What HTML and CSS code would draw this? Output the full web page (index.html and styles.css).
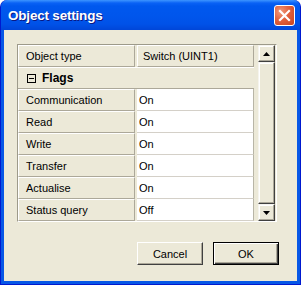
FILE: index.html
```html
<!DOCTYPE html>
<html>
<head>
<meta charset="utf-8">
<link rel="stylesheet" href="styles.css">
</head>
<body>
<div class="window">
  <div class="titlebar">
    <span class="title">Object settings</span>
    <div class="close">
      <svg width="13" height="13" viewBox="0 0 13 13"><path d="M2 2 L11 11 M11 2 L2 11" stroke="#fff" stroke-width="2.2" stroke-linecap="square"/></svg>
    </div>
  </div>
  <div class="client">
    <div class="grid">
      <div class="rows">
        <div class="row"><div class="name">Object type</div><div class="value ro">Switch (UINT1)</div></div>
        <div class="row cat"><span class="toggle"></span><span class="cat-label">Flags</span></div>
        <div class="row"><div class="name">Communication</div><div class="value">On</div></div>
        <div class="row"><div class="name">Read</div><div class="value">On</div></div>
        <div class="row"><div class="name">Write</div><div class="value">On</div></div>
        <div class="row"><div class="name">Transfer</div><div class="value">On</div></div>
        <div class="row"><div class="name">Actualise</div><div class="value">On</div></div>
        <div class="row"><div class="name">Status query</div><div class="value">Off</div></div>
      </div>
      <div class="scrollbar">
        <div class="sb-btn"><svg width="7" height="4" viewBox="0 0 7 4"><path d="M3.5 0 L7 4 L0 4 Z" fill="#000"/></svg></div>
        <div class="thumb"></div>
        <div class="sb-btn"><svg width="7" height="4" viewBox="0 0 7 4"><path d="M0 0 L7 0 L3.5 4 Z" fill="#000"/></svg></div>
      </div>
    </div>
    <div class="buttons">
      <div class="btn">Cancel</div>
      <div class="btn default">OK</div>
    </div>
  </div>
</div>
</body>
</html>
```
FILE: styles.css
```css
html, body {
  margin: 0;
  padding: 0;
  background: #fff;
}
body {
  width: 301px;
  height: 285px;
  overflow: hidden;
  font-family: "Liberation Sans", Arial, sans-serif;
  font-size: 11px;
  color: #000;
}
.window {
  width: 301px;
  height: 285px;
  box-sizing: border-box;
  display: flex;
  flex-direction: column;
  background: #0757e6;
  border: 1px solid #0019cf;
  border-top: none;
  border-radius: 7px 7px 0 0;
  padding: 0 3px 3px 3px;
}
.titlebar {
  height: 30px;
  margin: 0 -3px;
  flex: none;
  display: flex;
  align-items: center;
  justify-content: space-between;
  padding: 0 5px 0 7px;
  border-radius: 7px 7px 0 0;
  background: linear-gradient(to bottom, #3d95ff 0, #0a62f5 3px, #0058ee 6px, #0056ec 50%, #0052e8 80%, #0046d8 100%);
}
.title {
  color: #fff;
  font-weight: bold;
  font-size: 13.5px;
  letter-spacing: -0.2px;
  text-shadow: 1px 1px 0 #0a1883;
  margin-top: 1px;
}
.close {
  width: 19px;
  height: 19px;
  border: 1px solid #fff;
  border-radius: 3px;
  display: flex;
  align-items: center;
  justify-content: center;
  background: radial-gradient(circle at 30% 30%, #f09a7c 0, #e1613e 45%, #c8441d 100%);
}
.client {
  flex: 1;
  background: #ece9d8;
  padding: 14px 0 0 13px;
  display: flex;
  flex-direction: column;
}
.grid {
  width: 258px;
  height: 176px;
  border: 1px solid #9d9a8a;
  border-right-color: #fff;
  border-bottom-color: #fff;
  display: flex;
  background: #ece9d8;
}
.rows {
  width: 236px;
  display: flex;
  flex-direction: column;
}
.row {
  height: 22px;
  display: flex;
  flex: none;
}
.name {
  width: 117px;
  box-sizing: border-box;
  height: 22px;
  border-top: 1px solid #fff;
  border-left: 1px solid #fff;
  border-right: 1px solid #aca899;
  border-bottom: 1px solid #aca899;
  background: #ece9d8;
  padding-left: 7px;
  display: flex;
  align-items: center;
  color: #000;
  margin-right: 2px;
}
.value {
  flex: 1;
  box-sizing: border-box;
  height: 22px;
  background: #fff;
  border-bottom: 1px solid #d4d0c8;
  border-right: 1px solid #b8b5a6;
  padding-left: 2px;
  display: flex;
  align-items: center;
}
.value.ro {
  background: #ece9d8;
  border-top: 1px solid #fff;
  border-left: 1px solid #fff;
  border-bottom: 1px solid #aca899;
  border-right: 1px solid #aca899;
  padding-left: 5px;
}
.row.cat {
  box-sizing: border-box;
  border-top: 1px solid #fff;
  border-bottom: 1px solid #aca899;
  align-items: center;
  padding-left: 9px;
  font-weight: bold;
  font-size: 12px;
}
.toggle {
  width: 9px;
  height: 9px;
  box-sizing: border-box;
  border: 1px solid #000;
  position: relative;
  margin-right: 6px;
}
.toggle::after {
  content: "";
  position: absolute;
  left: 1px;
  right: 1px;
  top: 3px;
  height: 1px;
  background: #000;
}
.scrollbar {
  width: 17px;
  margin-left: 4px;
  display: flex;
  flex-direction: column;
}
.sb-btn, .thumb {
  box-sizing: border-box;
  background: #ece9d8;
  border: 1px solid;
  border-color: #f5f4ee #404040 #404040 #f5f4ee;
  box-shadow: inset -1px -1px 0 #aca899, inset 1px 1px 0 #fff;
}
.sb-btn {
  height: 17px;
  flex: none;
  display: flex;
  align-items: center;
  justify-content: center;
}
.thumb {
  flex: 1;
}
.buttons {
  display: flex;
  justify-content: flex-end;
  gap: 10px;
  margin-top: 20px;
  padding-right: 18px;
}
.btn {
  width: 66px;
  height: 23px;
  box-sizing: border-box;
  border: 1px solid;
  border-color: #fff #404040 #404040 #fff;
  box-shadow: inset -1px -1px 0 #aca899;
  background: #ece9d8;
  display: flex;
  align-items: center;
  justify-content: center;
}
.btn.default {
  border: 1px solid #000;
  box-shadow: inset 1px 1px 0 #fff, inset -1px -1px 0 #404040, inset -2px -2px 0 #aca899;
}
```
